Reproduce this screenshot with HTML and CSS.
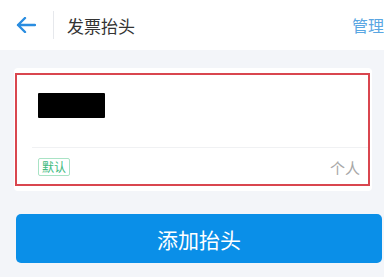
FILE: index.html
```html
<!DOCTYPE html>
<html lang="zh-CN">
<head>
    <meta charset="UTF-8">
    <meta name="viewport" content="width=device-width, initial-scale=1.0">
    <title>发票抬头</title>
    <link rel="stylesheet" href="styles.css">
</head>
<body>
    <div class="header">
        <div class="back">
            <svg width="20" height="16" viewBox="0 0 20 16">
                <path d="M19 8 H2 M9 1 L2 8 L9 15" fill="none" stroke="#2a8de0" stroke-width="2.4" stroke-linecap="round" stroke-linejoin="round"/>
            </svg>
        </div>
        <div class="divider"></div>
        <div class="title">发票抬头</div>
        <div class="manage">管理</div>
    </div>

    <div class="content">
        <div class="card">
            <div class="card-inner">
                <div class="card-name">
                    <div class="masked"></div>
                </div>
                <div class="card-foot">
                    <span class="tag">默认</span>
                    <span class="type">个人</span>
                </div>
            </div>
        </div>

        <button class="add-btn">添加抬头</button>
    </div>
</body>
</html>
```

FILE: styles.css
```css
body {
    margin: 0;
    background-color: #f3f5f9;
    font-family: "Noto Sans CJK SC", "Noto Sans", sans-serif;
    overflow: hidden;
}
.header {
    height: 50px;
    background-color: #ffffff;
    display: flex;
    align-items: center;
}
.back {
    width: 53px;
    display: flex;
    align-items: center;
    padding-left: 16px;
    box-sizing: border-box;
}
.back svg {
    display: block;
}
.divider {
    width: 1px;
    height: 28px;
    background-color: #e6e8ec;
}
.title {
    margin-left: 13px;
    font-size: 17px;
    color: #333333;
    flex: 1;
}
.manage {
    font-size: 16px;
    color: #5aa6e2;
    margin-right: 0;
    white-space: nowrap;
}
.content {
    padding: 18px 12px 0 14px;
}
.card {
    background-color: #ffffff;
    border-radius: 4px;
    padding: 5px 2px 5px 1px;
}
.card-inner {
    border: 2px solid #d9464f;
}
.card-name {
    height: 72px;
    padding: 18px 0 0 21px;
    box-sizing: border-box;
}
.masked {
    width: 67px;
    height: 25px;
    background-color: #000000;
    border-radius: 1px;
}
.card-foot {
    margin-left: 15px;
    border-top: 1px solid #f0f1f3;
    height: 36px;
    display: flex;
    align-items: center;
    justify-content: space-between;
    padding-left: 6px;
    padding-right: 8px;
}
.tag {
    font-size: 12px;
    line-height: 16px;
    color: #3dba7d;
    border: 1px solid #a9e3c5;
    border-radius: 2px;
    padding: 0 3px;
    margin-top: 2px;
}
.type {
    font-size: 15px;
    color: #a8a8a8;
    margin-top: 2px;
}
.add-btn {
    display: block;
    margin: 23px -10px 0 2px;
    width: calc(100% + 8px);
    height: 49px;
    border: none;
    border-radius: 5px;
    background-color: #0a8fe8;
    color: #ffffff;
    font-family: "Noto Sans CJK SC", "Noto Sans", sans-serif;
    font-size: 21px;
}
```
